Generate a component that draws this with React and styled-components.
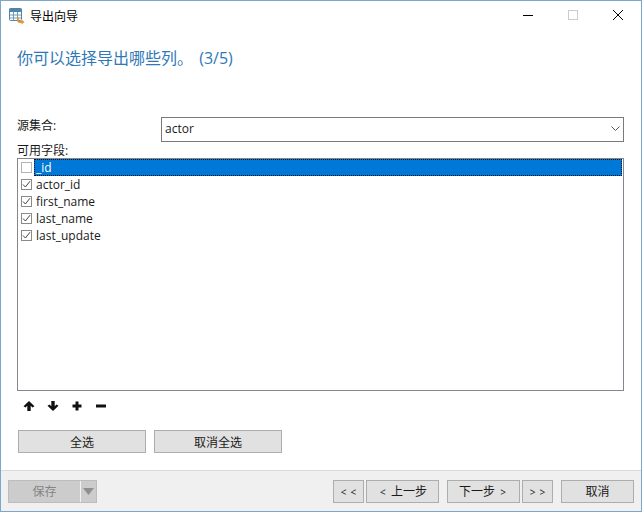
import React from 'react';
import styled, { createGlobalStyle } from 'styled-components';

const Global = createGlobalStyle`
  html, body { margin: 0; padding: 0; background: #fff; }
  * { box-sizing: border-box; }
`;

const Window = styled.div`
  width: 642px;
  height: 512px;
  display: flex;
  flex-direction: column;
  background: #fff;
  border: 1px solid #7ea6c6;
  font-family: "Open Sans", "Noto Sans CJK SC", sans-serif;
  font-size: 12px;
  color: #1a1a1a;
  overflow: hidden;
`;

const TitleBar = styled.div`
  height: 30px;
  display: flex;
  align-items: center;
  padding-left: 8px;
  flex: none;
`;

const TitleText = styled.span`
  margin-left: 5px;
  font-size: 12px;
  color: #000;
`;

const WinControls = styled.div`
  margin-left: auto;
  display: flex;
  align-items: center;
  gap: 35px;
  padding-right: 18px;
  padding-bottom: 2px;
`;

const Heading = styled.h1`
  margin: 0;
  padding: 16px 0 0 16px;
  height: 56px;
  font-size: 16px;
  line-height: 22px;
  font-weight: 400;
  color: #2f78b8;
  flex: none;
  word-spacing: 2px;
`;

const Body = styled.div`
  flex: 1;
  padding: 30px 17px 0 16px;
  display: flex;
  flex-direction: column;
`;

const SourceRow = styled.div`
  display: flex;
  height: 25px;
`;

const Label = styled.label`
  display: block;
  line-height: 17px;
  height: 17px;
`;

const SourceLabel = styled(Label)`
  width: 144px;
`;

const Combo = styled.div`
  flex: 1;
  display: flex;
  align-items: center;
  justify-content: space-between;
  padding: 0 3px 2px 3px;
  border: 1px solid #7a7a7a;
  font-size: 12px;
`;

const FieldList = styled.div`
  height: 233px;
  margin-top: -1px;
  border: 1px solid #828790;
  padding: 0 1px;
`;

const Row = styled.div`
  height: 17px;
  display: flex;
  align-items: center;
  padding-left: 2px;
`;

const Box = styled.span`
  width: 11px;
  height: 11px;
  flex: none;
  border: 1px solid ${(p) => (p.$checked ? '#8a8a8a' : '#b4b4b4')};
  background: #fff;
  display: flex;
  align-items: center;
  justify-content: center;
`;

const FieldName = styled.span`
  margin-left: 2px;
  flex: ${(p) => (p.$selected ? '1' : 'none')};
  height: 17px;
  line-height: 18px;
  padding-left: 2px;
  color: ${(p) => (p.$selected ? '#fff' : '#1a1a1a')};
  background: ${(p) => (p.$selected ? '#0078d7' : 'transparent')};
  outline: ${(p) => (p.$selected ? '1px dotted #111' : 'none')};
  outline-offset: -1px;
`;

const IconBar = styled.div`
  display: flex;
  gap: 12px;
  margin-top: 9px;
  padding-left: 6px;
  height: 12px;
`;

const BulkRow = styled.div`
  display: flex;
  gap: 8px;
  margin-top: 18px;
  padding-left: 1px;
`;

const Button = styled.button`
  width: ${(p) => p.$w}px;
  height: 23px;
  margin: 0;
  padding: 0;
  background: #e1e1e1;
  border: 1px solid #adadad;
  border-radius: 0;
  font: inherit;
  color: #1a1a1a;
  flex: none;
`;

const Footer = styled.div`
  height: 41px;
  flex: none;
  display: flex;
  align-items: center;
  padding: 0 7px;
  background: #f0f0f0;
  border-top: 1px solid #d9d9d9;
`;

const SaveButton = styled.div`
  width: 89px;
  height: 23px;
  display: flex;
  align-items: center;
  background: #cccccc;
  border: 1px solid #bdbdbd;
  color: #848484;
`;

const SaveLabel = styled.span`
  width: 71px;
  text-align: center;
`;

const SaveSplit = styled.span`
  flex: 1;
  height: 100%;
  display: flex;
  align-items: center;
  justify-content: center;
  border-left: 1px solid #f2f2f2;
`;

const NavGroup = styled.div`
  margin-left: auto;
  display: flex;
`;

const NavButton = styled(Button)`
  margin-left: ${(p) => p.$gap}px;
`;

// the < and > on the wizard buttons are drawn smaller than the label text
const Angle = styled.span`
  font-size: 10px;
  margin: 0 2px;
`;

const Check = () => (
  <svg width="9" height="9" viewBox="0 0 9 9">
    <path d="M1 4.5L3.4 7L8 1.2" fill="none" stroke="#444" strokeWidth="1" />
  </svg>
);

const TableIcon = () => (
  <svg width="16" height="17" viewBox="0 0 16 17">
    <rect x="0.5" y="0.5" width="12" height="12" rx="1" fill="#fff" stroke="#4f84a8" />
    <rect x="0.5" y="0.5" width="12" height="3.5" fill="#4f84a8" />
    <path d="M4.5 4V12.5M8.5 4V12.5M1 7H12M1 10H12" stroke="#6f9cba" strokeWidth="1" />
    <path d="M9 9.5V12.5Q9 14 11 14H13" fill="none" stroke="#e8962e" strokeWidth="1.8" />
    <path d="M12.5 11.5L15.5 14L12.5 16.5Z" fill="#e8962e" />
  </svg>
);

const Minimize = () => (
  <svg width="10" height="10" viewBox="0 0 10 10">
    <path d="M0 5.5H10" stroke="#000" strokeWidth="1" />
  </svg>
);

const Maximize = () => (
  <svg width="10" height="10" viewBox="0 0 10 10">
    <rect x="0.5" y="0.5" width="9" height="9" fill="none" stroke="#ccc" />
  </svg>
);

const Close = () => (
  <svg width="10" height="10" viewBox="0 0 10 10">
    <path d="M0 0L10 10M10 0L0 10" stroke="#000" strokeWidth="1" />
  </svg>
);

const Chevron = () => (
  <svg width="9" height="5" viewBox="0 0 9 5">
    <path d="M0.5 0.5L4.5 4.5L8.5 0.5" fill="none" stroke="#555" strokeWidth="1" />
  </svg>
);

const ToolIcon = ({ d }) => (
  <svg width="12" height="12" viewBox="0 0 12 12">
    <path d={d} fill="#111" />
  </svg>
);

const icons = [
  'M6 1L11.5 6.2L9.5 7.6L7.7 5.8V11H4.3V5.8L2.5 7.6L0.5 6.2Z',
  'M6 11L11.5 5.8L9.5 4.4L7.7 6.2V1H4.3V6.2L2.5 4.4L0.5 5.8Z',
  'M4.5 1.5H7.5V4.5H10.5V7.5H7.5V10.5H4.5V7.5H1.5V4.5H4.5Z',
  'M1 4.5H11V7.5H1Z',
];

const fields = [
  { name: '_id', checked: false, selected: true },
  { name: 'actor_id', checked: true },
  { name: 'first_name', checked: true },
  { name: 'last_name', checked: true },
  { name: 'last_update', checked: true },
];

const App = () => {
  return (
    <Window>
      <Global />
      <TitleBar>
        <TableIcon />
        <TitleText>导出向导</TitleText>
        <WinControls>
          <Minimize />
          <Maximize />
          <Close />
        </WinControls>
      </TitleBar>
      <Heading>你可以选择导出哪些列。 (3/5)</Heading>
      <Body>
        <SourceRow>
          <SourceLabel>源集合:</SourceLabel>
          <Combo>
            <span>actor</span>
            <Chevron />
          </Combo>
        </SourceRow>
        <Label>可用字段:</Label>
        <FieldList>
          {fields.map((f) => (
            <Row key={f.name}>
              <Box $checked={f.checked}>{f.checked && <Check />}</Box>
              <FieldName $selected={f.selected}>{f.name}</FieldName>
            </Row>
          ))}
        </FieldList>
        <IconBar>
          {icons.map((d) => (
            <ToolIcon key={d} d={d} />
          ))}
        </IconBar>
        <BulkRow>
          <Button $w={128}>全选</Button>
          <Button $w={128}>取消全选</Button>
        </BulkRow>
      </Body>
      <Footer>
        <SaveButton>
          <SaveLabel>保存</SaveLabel>
          <SaveSplit>
            <svg width="11" height="7" viewBox="0 0 11 7">
              <path d="M0 0H11L5.5 7Z" fill="#8f8f8f" />
            </svg>
          </SaveSplit>
        </SaveButton>
        <NavGroup>
          <NavButton $w={31} $gap={0}><Angle>&lt;</Angle><Angle>&lt;</Angle></NavButton>
          <NavButton $w={73} $gap={2}><Angle>&lt;</Angle> 上一步</NavButton>
          <NavButton $w={73} $gap={8}>下一步 <Angle>&gt;</Angle></NavButton>
          <NavButton $w={31} $gap={2}><Angle>&gt;</Angle><Angle>&gt;</Angle></NavButton>
          <NavButton $w={73} $gap={8}>取消</NavButton>
        </NavGroup>
      </Footer>
    </Window>
  );
};

export default App;
